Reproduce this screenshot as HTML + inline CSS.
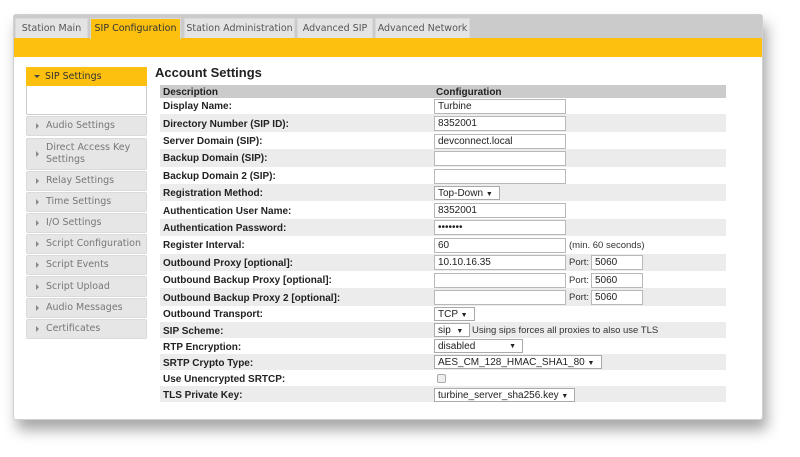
<!DOCTYPE html>
<html><head><meta charset="utf-8"><style>
*{margin:0;padding:0;box-sizing:border-box}
body{width:800px;height:457px;background:#fff;position:relative;overflow:hidden;font-family:"Liberation Sans",Arial,sans-serif}
.frame{position:absolute;left:13px;top:14px;width:750px;height:406px;background:#fff;border:1px solid #d0d0d0;box-shadow:4px 10px 14px rgba(0,0,0,0.35);border-radius:3px}
.tabbar{position:absolute;left:14px;top:15px;width:748px;height:23px;background:#cbcbcb}
.yellow{position:absolute;left:14px;top:38px;width:748px;height:19px;background:#fdc00f}
.tab{position:absolute;top:18px;height:20px;background:#e4e4e4;font:9.5px "DejaVu Sans",sans-serif;color:#555;text-align:center;line-height:20px;border:1px solid #d8d8d8;border-bottom:none;white-space:nowrap;overflow:hidden}
.tab.act{background:#fdc00f;color:#333;top:18px;height:21px}
.side{position:absolute;left:26px;width:121px;background:#e6e6e6;border:1px solid #dadada;border-radius:2px;font:9.5px "DejaVu Sans",sans-serif;color:#777;padding-left:19px;display:flex;align-items:center;line-height:12px}
.side:before{content:"";position:absolute;left:9px;top:50%;margin-top:-3px;border-left:3px solid #888;border-top:3px solid transparent;border-bottom:3px solid transparent}
.h{position:absolute;left:155px;top:65px;font-weight:bold;font-size:13px;color:#222}
.row{position:absolute;left:160px;width:566px;font-weight:bold;font-size:10px;color:#222;padding-left:3px;padding-top:2px;display:flex;align-items:center}
.g{background:#ececec}
.inp{position:absolute;height:15px;border:1px solid #b8b8b8;background:#fff;font-size:10px;color:#222;padding-left:3px;line-height:14px}
.sel{position:absolute;height:14px;border:1px solid #aaa;background:#fff;font-size:10px;color:#222;padding-left:3px;line-height:13px}
.t{position:absolute;font-size:9.5px;color:#333}
</style></head><body>
<div class="frame"></div>
<div class="tabbar"></div>
<div class="yellow"></div>
<div class="tab" style="left:15px;width:73px">Station Main</div>
<div class="tab act" style="left:90px;width:91px">SIP Configuration</div>
<div class="tab" style="left:184px;width:111px">Station Administration</div>
<div class="tab" style="left:297px;width:76px">Advanced SIP</div>
<div class="tab" style="left:375px;width:95px">Advanced Network</div>

<div style="position:absolute;left:26px;top:67px;width:121px;height:48px;border:1px solid #ccc;background:#fff;border-radius:2px"></div>
<div style="position:absolute;left:26px;top:67px;width:121px;height:19px;background:#fdc00f;font:9.5px 'DejaVu Sans',sans-serif;color:#333;line-height:19px;padding-left:19px">SIP Settings</div>
<div style="position:absolute;left:34px;top:75px;border-top:3px solid #444;border-left:3px solid transparent;border-right:3px solid transparent"></div>
<div class="side" style="top:116px;height:20px">Audio Settings</div>
<div class="side" style="top:138px;height:32px">Direct Access Key Settings</div>
<div class="side" style="top:171px;height:20px">Relay Settings</div>
<div class="side" style="top:192px;height:20px">Time Settings</div>
<div class="side" style="top:213px;height:20px">I/O Settings</div>
<div class="side" style="top:234px;height:20px">Script Configuration</div>
<div class="side" style="top:255px;height:20px">Script Events</div>
<div class="side" style="top:276px;height:21px">Script Upload</div>
<div class="side" style="top:298px;height:20px">Audio Messages</div>
<div class="side" style="top:319px;height:20px">Certificates</div>

<div class="h">Account Settings</div>
<div class="row" style="top:85px;height:13px;background:#cbcbcb;padding-top:1px">Description<span style="position:absolute;left:276px">Configuration</span></div>
<div class="row" style="top:97px;height:17px">Display Name:</div>
<div class="row g" style="top:114.4px;height:17.4px">Directory Number (SIP ID):</div>
<div class="row" style="top:131.8px;height:17.4px">Server Domain (SIP):</div>
<div class="row g" style="top:149.2px;height:17.4px">Backup Domain (SIP):</div>
<div class="row" style="top:166.6px;height:17.4px">Backup Domain 2 (SIP):</div>
<div class="row g" style="top:184px;height:17.4px">Registration Method:</div>
<div class="row" style="top:201.4px;height:17.4px">Authentication User Name:</div>
<div class="row g" style="top:218.8px;height:17.4px">Authentication Password:</div>
<div class="row" style="top:236.2px;height:17.4px">Register Interval:</div>
<div class="row g" style="top:253.6px;height:17.4px">Outbound Proxy [optional]:</div>
<div class="row" style="top:271px;height:17.4px">Outbound Backup Proxy [optional]:</div>
<div class="row g" style="top:288.4px;height:17.4px">Outbound Backup Proxy 2 [optional]:</div>
<div class="row" style="top:305.8px;height:16.2px">Outbound Transport:</div>
<div class="row g" style="top:322px;height:16px">SIP Scheme:</div>
<div class="row" style="top:338px;height:16px">RTP Encryption:</div>
<div class="row g" style="top:354px;height:16px">SRTP Crypto Type:</div>
<div class="row" style="top:370px;height:16px">Use Unencrypted SRTCP:</div>
<div class="row g" style="top:386px;height:16px">TLS Private Key:</div>

<div class="inp" style="left:434px;top:99px;width:132px">Turbine</div>
<div class="inp" style="left:434px;top:116px;width:132px">8352001</div>
<div class="inp" style="left:434px;top:134px;width:132px">devconnect.local</div>
<div class="inp" style="left:434px;top:151px;width:132px"></div>
<div class="inp" style="left:434px;top:169px;width:132px"></div>
<div class="sel" style="left:434px;top:186px;width:66px">Top-Down <span style="font-size:7px">▼</span></div>
<div class="inp" style="left:434px;top:203px;width:132px">8352001</div>
<div class="inp" style="left:434px;top:220px;width:132px">•••••••</div>
<div class="inp" style="left:434px;top:238px;width:132px">60</div>
<div class="t" style="left:569px;top:240px">(min. 60 seconds)</div>
<div class="inp" style="left:434px;top:255px;width:132px">10.10.16.35</div>
<div class="inp" style="left:434px;top:273px;width:132px"></div>
<div class="inp" style="left:434px;top:290px;width:132px"></div>
<div class="t" style="left:569px;top:257px">Port:</div>
<div class="t" style="left:569px;top:275px">Port:</div>
<div class="t" style="left:569px;top:292px">Port:</div>
<div class="inp" style="left:591px;top:255px;width:52px">5060</div>
<div class="inp" style="left:591px;top:273px;width:52px">5060</div>
<div class="inp" style="left:591px;top:290px;width:52px">5060</div>
<div class="sel" style="left:434px;top:307px;width:41px">TCP <span style="font-size:7px">▼</span></div>
<div class="sel" style="left:434px;top:323px;width:36px">sip &nbsp;<span style="font-size:7px">▼</span></div>
<div class="t" style="left:472px;top:325px">Using sips forces all proxies to also use TLS</div>
<div class="sel" style="left:434px;top:339px;width:89px">disabled<span style="font-size:7px;position:absolute;right:6px">▼</span></div>
<div class="sel" style="left:434px;top:355px;width:168px">AES_CM_128_HMAC_SHA1_80 <span style="font-size:7px">▼</span></div>
<div style="position:absolute;left:437px;top:374px;width:9px;height:9px;border:1px solid #aaa;background:#eee;border-radius:2px"></div>
<div class="sel" style="left:434px;top:388px;width:141px">turbine_server_sha256.key <span style="font-size:7px">▼</span></div>
</body></html>
